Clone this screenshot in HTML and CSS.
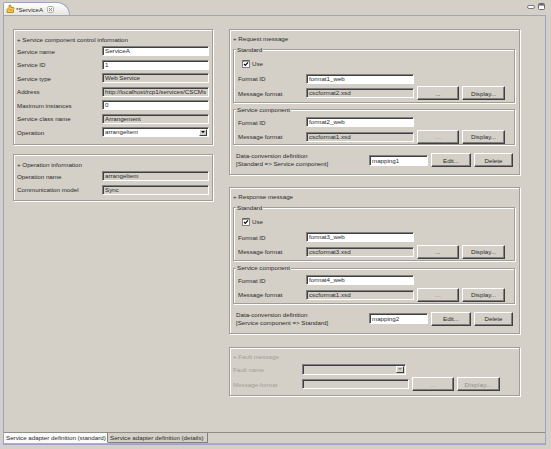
FILE: index.html
```html
<!DOCTYPE html>
<html>
<head>
<meta charset="utf-8">
<title>*ServiceA</title>
<link rel="stylesheet" href="styles.css">
</head>
<body>
<div class="window">
  <div class="tabbar">
    <div class="tab">
      <svg class="tab-icon" width="9" height="10" viewBox="0 0 9 10">
        <path d="M1 5.5 L3 3.5 L3 1.5 Q4 0.6 5 1.5 L5 3.5 L7.5 3.5 Q8.5 4.5 7.5 5.5 L7.5 8.5 L1 8.5 Z" fill="#f2c94c" stroke="#b07a14" stroke-width="0.8"/>
        <path d="M3 6 L6 6" stroke="#b07a14" stroke-width="0.7"/>
      </svg>
      <span class="tab-label">*ServiceA</span>
      <svg class="tab-close" width="7" height="7" viewBox="0 0 7 7">
        <rect x="0.5" y="0.5" width="6" height="6" rx="1.2" fill="none" stroke="#b0b0b0"/>
        <path d="M2 2 L5 5 M5 2 L2 5" stroke="#808080" stroke-width="0.9"/>
      </svg>
    </div>
    <div class="win-btns">
      <svg width="8" height="4" viewBox="0 0 8 4">
        <rect x="0.5" y="0.5" width="7" height="3" rx="1.5" fill="#fff" stroke="#7a7a7a"/>
      </svg>
      <svg width="7" height="7" viewBox="0 0 7 7">
        <rect x="0.5" y="0.5" width="6" height="6" rx="1" fill="#fff" stroke="#6a6a6a"/>
        <rect x="1" y="1" width="5" height="1.6" fill="#6a6a6a"/>
      </svg>
    </div>
  </div>

  <div class="editor">
    <div class="page">
      <div class="col-left">
        <section class="group lgroup">
          <div class="gtitle">+ Service component control information</div>
          <div class="form">
            <span class="lbl">Service name</span><span class="input">ServiceA</span>
            <span class="lbl">Service ID</span><span class="input">1</span>
            <span class="lbl">Service type</span><span class="input ro">Web Service</span>
            <span class="lbl">Address</span><span class="input ro">http://localhost/rcp1/services/CSCMs</span>
            <span class="lbl">Maximum instances</span><span class="input">0</span>
            <span class="lbl">Service class name</span><span class="input ro">Arrangement</span>
            <span class="lbl">Operation</span><span class="input combo"><span class="ctext">arrangeItem</span><span class="combo-btn"></span></span>
          </div>
        </section>
        <section class="group lgroup op">
          <div class="gtitle">+ Operation information</div>
          <div class="form">
            <span class="lbl">Operation name</span><span class="input ro">arrangeItem</span>
            <span class="lbl">Communication model</span><span class="input ro">Sync</span>
          </div>
        </section>
      </div>

      <div class="col-right">
        <section class="group msg">
          <div class="gtitle">+ Request message</div>
          <fieldset class="sub std">
            <legend>Standard</legend>
            <div class="userow"><svg class="check" width="8" height="8" viewBox="0 0 8 8"><rect x="0.5" y="0.5" width="7" height="7" fill="#fff" stroke="#808080"/><path d="M1 1.5 L1 1 L7 1" stroke="#404040" fill="none"/><path d="M2 3.8 L3.3 5.3 L6 2.3" stroke="#000" stroke-width="1.2" fill="none"/></svg><span>Use</span></div>
            <div class="frow"><span class="lbl">Format ID</span><span class="input">format1_web</span></div>
            <div class="frow"><span class="lbl">Message format</span><span class="input ro">cscformat2.xsd</span><span class="btn">...</span><span class="btn">Display...</span></div>
          </fieldset>
          <fieldset class="sub sc">
            <legend>Service component</legend>
            <div class="frow"><span class="lbl">Format ID</span><span class="input">format2_web</span></div>
            <div class="frow"><span class="lbl">Message format</span><span class="input ro">cscformat1.xsd</span><span class="btn disabled">...</span><span class="btn">Display...</span></div>
          </fieldset>
          <div class="dcrow">
            <span class="lbl two">Data-conversion definition<br>[Standard =&gt; Service component]</span>
            <span class="input map">mapping1</span>
            <span class="btn">Edit...</span>
            <span class="btn">Delete</span>
          </div>
        </section>

        <section class="group msg resp">
          <div class="gtitle">+ Response message</div>
          <fieldset class="sub std">
            <legend>Standard</legend>
            <div class="userow"><svg class="check" width="8" height="8" viewBox="0 0 8 8"><rect x="0.5" y="0.5" width="7" height="7" fill="#fff" stroke="#808080"/><path d="M1 1.5 L1 1 L7 1" stroke="#404040" fill="none"/><path d="M2 3.8 L3.3 5.3 L6 2.3" stroke="#000" stroke-width="1.2" fill="none"/></svg><span>Use</span></div>
            <div class="frow"><span class="lbl">Format ID</span><span class="input">format3_web</span></div>
            <div class="frow"><span class="lbl">Message format</span><span class="input ro">cscformat3.xsd</span><span class="btn">...</span><span class="btn">Display...</span></div>
          </fieldset>
          <fieldset class="sub sc">
            <legend>Service component</legend>
            <div class="frow"><span class="lbl">Format ID</span><span class="input">format4_web</span></div>
            <div class="frow"><span class="lbl">Message format</span><span class="input ro">cscformat1.xsd</span><span class="btn disabled">...</span><span class="btn">Display...</span></div>
          </fieldset>
          <div class="dcrow">
            <span class="lbl two">Data-conversion definition<br>[Service component =&gt; Standard]</span>
            <span class="input map">mapping2</span>
            <span class="btn">Edit...</span>
            <span class="btn">Delete</span>
          </div>
        </section>

        <section class="group fault">
          <div class="gtitle">+ Fault message</div>
          <div class="frow frow-f"><span class="lbl">Fault name</span><span class="input ro combo fcombo"><span class="ctext"></span><span class="combo-btn"></span></span></div>
          <div class="frow frow-f"><span class="lbl">Message format</span><span class="input ro"></span><span class="btn disabled">...</span><span class="btn disabled">Display...</span></div>
        </section>
      </div>
    </div>

    <div class="page-tabs">
      <div class="ptab active">Service adapter definition (standard)</div>
      <div class="ptab">Service adapter definition (details)</div>
    </div>
  </div>
</div>
</body>
</html>
```

FILE: styles.css
```css
* { box-sizing: border-box; }
html, body { margin: 0; padding: 0; }
body {
  width: 551px;
  height: 449px;
  overflow: hidden;
  background: #d4d0c8;
  font-family: "Liberation Sans", Arial, sans-serif;
  font-size: 6.2px;
  color: #2a2a2a;
}
.window { height: 449px; display: flex; flex-direction: column; }

/* top editor tab strip */
.tabbar {
  height: 15px;
  flex: none;
  display: flex;
  justify-content: space-between;
  align-items: flex-end;
  padding-left: 3px;
}
.tab {
  width: 67px;
  height: 13px;
  display: flex;
  align-items: center;
  padding-left: 2px;
  border: 1px solid #9aa6c4;
  border-bottom: none;
  border-radius: 2px 13px 0 0;
  background: linear-gradient(#ffffff, #e7e5df);
}
.tab-label { margin-left: 1px; line-height: 9px; white-space: nowrap; }
.tab-close { margin-left: 4px; flex: none; }
.tab-icon { flex: none; }
.win-btns {
  align-self: flex-start;
  display: flex;
  align-items: center;
  gap: 3px;
  margin: 3px 6px 0 0;
}

/* editor frame */
.editor {
  flex: 1;
  margin: 0 5px 4px 3px;
  border: 1px solid #9aa6c4;
  display: flex;
  flex-direction: column;
  min-height: 0;
}
.page {
  flex: 1;
  display: flex;
  align-items: flex-start;
  gap: 16px;
  padding: 13px 0 0 9px;
}
.col-left { width: 200px; display: flex; flex-direction: column; gap: 9px; }
.col-right { width: 291px; display: flex; flex-direction: column; }

/* etched group boxes */
.group {
  border: 1px solid #a29e96;
  box-shadow: inset 1px 1px 0 #fff, 1px 1px 0 #fff;
}
.gtitle { height: 10px; line-height: 10px; white-space: nowrap; }
.lgroup { padding: 4.5px 3px 5px 3px; }
.lgroup.op { padding-bottom: 3.5px; }
.form {
  display: grid;
  grid-template-columns: 85px 107px;
  grid-auto-rows: 13.5px;
  align-items: center;
}
.lbl { white-space: nowrap; }

/* text fields */
.input {
  display: block;
  height: 10px;
  border: 1px solid;
  border-color: #808080 #ffffff #ffffff #808080;
  box-shadow: inset 1px 1px 0 #404040;
  background: #fff;
  padding: 0 2px;
  line-height: 8px;
  white-space: nowrap;
  overflow: hidden;
}
.input.ro { background: #d4d0c8; }
.combo { display: flex; align-items: center; justify-content: space-between; padding-right: 1px; }
.ctext { overflow: hidden; }
.combo-btn {
  flex: none;
  width: 8px;
  height: 7px;
  border: 1px solid;
  border-color: #fff #404040 #404040 #fff;
  background: #d4d0c8;
  display: flex;
  align-items: center;
  justify-content: center;
}
.combo-btn::after {
  content: "";
  border-left: 2px solid transparent;
  border-right: 2px solid transparent;
  border-top: 2px solid #000;
}

/* buttons */
.btn {
  height: 14px;
  border: 1px solid;
  border-color: #ffffff #404040 #404040 #ffffff;
  box-shadow: inset -1px -1px 0 #808080;
  background: #d4d0c8;
  display: flex;
  align-items: center;
  justify-content: center;
  white-space: nowrap;
}
.btn.disabled { color: #6f6c66; letter-spacing: 0.3px; }

/* message groups */
.msg { padding: 4px 4px 5px 3px; }
.resp { margin-top: 12px; }
.sub {
  margin: 0;
  padding: 0 0 0 4px;
  min-width: 0;
  border: 1px solid #a29e96;
  box-shadow: inset 1px 1px 0 #fff, 1px 1px 0 #fff;
}
.sub legend {
  padding: 0 1px;
  margin-left: -2px;
  line-height: 8px;
  background: #d4d0c8;
}
.std { margin-top: 1.5px; padding-top: 2px; padding-bottom: 1.2px; }
.sc { margin-top: 3.3px; padding-top: 0.8px; padding-bottom: 0.5px; }
.userow {
  height: 16px;
  display: flex;
  align-items: center;
  gap: 2px;
  padding-left: 4px;
}
.check { flex: none; }
.frow {
  height: 14.5px;
  display: grid;
  grid-template-columns: 65px 108px 42px 43px;
  column-gap: 3px;
  align-items: center;
}
.dcrow {
  margin-top: 6px;
  height: 18px;
  display: grid;
  grid-template-columns: 130px 59px 40px 39px;
  column-gap: 3px;
  align-items: center;
  padding-left: 3px;
}
.two { line-height: 8px; }
.input.map { height: 11px; line-height: 9px; }

/* disabled fault group */
.fault { margin-top: 13px; padding: 4px 4px 3px 3px; color: #a29e96; }
.fault .btn.disabled { color: #8f8b83; }
.frow-f { height: 15px; grid-template-columns: 66px 107px 42px 43px; }
.fcombo { width: 104px; height: 11px; }
.fault .combo-btn::after { border-top-color: #8a8780; }

/* bottom page tabs */
.page-tabs {
  height: 12px;
  flex: none;
  display: flex;
  align-items: flex-start;
  border-top: 1px solid #8f8c85;
  border-bottom: 1px solid #b4b0a8;
}
.ptab {
  height: 10px;
  line-height: 10px;
  padding: 0 2px;
  white-space: nowrap;
  border-right: 1px solid #808080;
  border-bottom: 1px solid #808080;
}
.ptab.active { width: 104px; background: #fafafa; border-bottom-color: #fafafa; }
.ptab:not(.active) { width: 100px; }
```
